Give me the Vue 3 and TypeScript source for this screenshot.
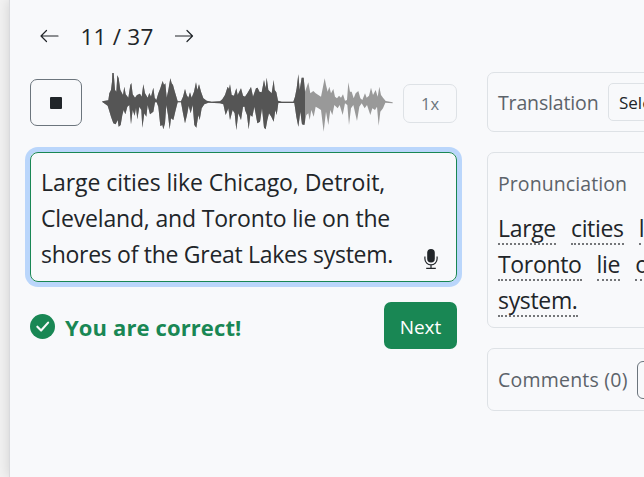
<script setup lang="ts">
import { ref } from 'vue'

type Point = [number, number]

const current = ref(11)
const total = 37
const answerLines = [
  { text: 'Large cities like Chicago, Detroit,', fit: 'fit-a' },
  { text: 'Cleveland, and Toronto lie on the', fit: 'fit-b' },
  { text: 'shores of the Great Lakes system.', fit: 'fit-c' },
]
const wordRows: string[][] = [
  ['Large', 'cities', 'like'],
  ['Toronto', 'lie', 'on'],
  ['system.'],
]

// Waveform envelopes: upper and lower edge of the clip
const upper: Point[] = [
  [22,109],[40,106],[43,85],[48,75],[51,50],[52,24],[56,24],[60,75],[64,80],[67,31],[71,40],[76,75],[84,90],[88,65],[92,88],[100,98],[106,60],[109,54],[113,88],[120,98],[126,90],[135,86],[140,95],[145,58],[150,85],[158,98],[163,84],[168,95],[175,68],[179,98],[184,105],[190,85],[196,70],[203,48],[207,60],[211,55],[215,98],[220,75],[226,40],[230,55],[234,60],[238,75],[244,95],[248,109],[258,109],[264,95],[270,72],[275,90],[280,98],[285,82],[290,98],[297,80],[303,52],[307,75],[312,58],[318,80],[325,100],[335,107],[350,110],[375,109],[382,103],[390,90],[398,65],[402,72],[405,58],[410,90],[417,92],[424,70],[428,90],[438,70],[444,92],
]
const upperTail: Point[] = [
  [0,95],[8,83],[18,66],[24,95],[33,70],[38,68],[43,80],[50,82],[57,45],[62,70],[65,38],[70,75],[80,85],[86,45],[89,75],[94,82],[99,107],[110,110],[145,110],[150,95],[155,70],[160,28],[164,75],[170,38],[176,38],[180,80],[190,52],[196,85],[205,78],[212,85],[220,90],[228,95],[234,65],[239,40],[243,60],[248,80],[253,65],[258,85],[265,72],[270,95],[276,100],[282,92],[288,98],[294,88],[300,107],[306,105],[310,52],[315,80],[320,80],[326,100],[332,85],[340,78],[346,100],[352,105],[360,85],[365,98],[372,92],[378,68],[384,90],[392,75],[398,95],[403,65],[408,90],[414,98],[422,108],[443,112],
]
const lower: Point[] = [
  [22,111],[38,122],[42,135],[48,155],[55,175],[62,178],[68,165],[71,185],[77,180],[82,150],[86,135],[91,148],[97,125],[103,120],[108,178],[113,135],[119,152],[123,128],[127,163],[133,125],[139,135],[142,188],[148,145],[154,155],[158,120],[165,148],[175,140],[180,112],[185,112],[190,125],[196,183],[202,180],[205,193],[210,175],[214,120],[219,150],[224,193],[228,160],[235,165],[242,135],[248,112],[258,112],[264,145],[270,175],[276,150],[281,122],[287,145],[293,120],[298,180],[304,188],[310,150],[314,165],[320,130],[328,118],[340,113],[375,115],[385,118],[392,150],[400,130],[405,165],[413,135],[419,145],[424,195],[430,145],[438,165],[444,125],[449,125],
]
const lowerTail: Point[] = [
  [0,135],[6,150],[11,193],[16,150],[22,155],[28,125],[37,175],[45,170],[51,130],[57,188],[62,193],[67,165],[72,145],[79,155],[86,170],[91,135],[95,150],[100,114],[148,114],[154,155],[160,185],[166,140],[171,178],[178,180],[184,150],[190,145],[194,165],[199,135],[206,155],[212,125],[220,130],[228,135],[236,200],[243,140],[250,180],[256,135],[262,150],[268,120],[278,130],[284,120],[293,150],[300,115],[307,120],[312,180],[318,130],[325,120],[336,168],[343,125],[350,115],[359,130],[366,120],[376,150],[382,130],[390,135],[396,125],[401,182],[406,140],[414,130],[421,113],[443,115],
]
const shift = (points: Point[]): Point[] => points.map(([x, y]): Point => [x + 450, y])
const outline = [
  ...upper,
  ...shift(upperTail),
  ...[...lower, ...shift(lowerTail)].reverse(),
].map((p) => p.join(',')).join(' ')
</script>

<template>
  <main class="page">
    <section class="panel">
      <nav class="pager">
        <svg class="arrow" viewBox="0 0 20 16"><path d="M18 8H1M6.5 2.5 1 8l5.5 5.5" /></svg>
        <span class="count">{{ current }} / {{ total }}</span>
        <svg class="arrow" viewBox="0 0 20 16"><path d="M.5 8h17M12 2.5 17.5 8 12 13.5" /></svg>
      </nav>

      <div class="columns">
        <div class="exercise">
          <div class="player">
            <button class="stop" aria-label="Stop"><span class="square"></span></button>
            <svg class="wave" viewBox="21 15 876 195" preserveAspectRatio="none">
              <defs>
                <clipPath id="played"><rect x="0" y="0" width="630" height="225" /></clipPath>
              </defs>
              <polygon :points="outline" fill="#999" />
              <polygon :points="outline" fill="#555" clip-path="url(#played)" />
            </svg>
            <button class="speed">1x</button>
          </div>

          <div class="answer">
            <div class="answer-text">
              <div v-for="line in answerLines" :key="line.fit" :class="line.fit">{{ line.text }}</div>
            </div>
            <svg class="mic" viewBox="0 0 16 22">
              <rect x="4.2" y="1" width="7.6" height="13.6" rx="3.8" fill="#212529" />
              <path d="M1.9 8.5v2.3a6.1 6.1 0 0 0 12.2 0V8.5M8 17v3.4M3.2 20.4h9.6" fill="none" stroke="#212529" stroke-width="1.2" />
            </svg>
          </div>

          <div class="result">
            <svg class="check" viewBox="0 0 16 16">
              <circle cx="8" cy="8" r="8" fill="#198754" />
              <path d="M4.7 8.1l2.4 2.5 4.5-5.1" fill="none" stroke="#f8f9fa" stroke-width="1.35" stroke-linecap="round" stroke-linejoin="round" />
            </svg>
            <strong class="verdict">You are correct!</strong>
            <button class="next">Next</button>
          </div>
        </div>

        <aside class="side">
          <div class="card translation">
            <span class="label translation-label">Translation</span>
            <div class="select">Select</div>
          </div>
          <div class="card pronunciation">
            <div class="label pron-label">Pronunciation</div>
            <div v-for="(row, i) in wordRows" :key="i" class="words">
              <span v-for="word in row" :key="word" class="word">{{ word }}</span>
            </div>
          </div>
          <div class="card comments">
            <span class="label comments-label">Comments (0)</span>
            <button class="add"></button>
          </div>
        </aside>
      </div>
    </section>
  </main>
</template>

<style>
body {
  margin: 0;
  overflow: hidden;
}
</style>

<style scoped>
* {
  box-sizing: border-box;
}
.page {
  display: flex;
  width: 644px;
  height: 477px;
  padding-left: 9px;
  overflow: hidden;
  background: #f2f2f2;
  color: #212529;
  font-family: "Open Sans", "Noto Sans", sans-serif;
}
button {
  font-family: inherit;
  padding: 0;
  background: transparent;
}
.panel {
  flex: 0 0 auto;
  width: 900px;
  height: 477px;
  padding: 20px 20px 0;
  border-left: 1px solid #d9dadd;
  background: #f8f9fb;
  box-shadow: 0 0 12px rgba(0, 0, 0, 0.14);
}
.pager {
  display: flex;
  align-items: center;
  height: 32px;
  padding-left: 10px;
}
.arrow {
  width: 20px;
  height: 16px;
  fill: none;
  stroke: #212529;
  stroke-width: 1.2;
  stroke-linecap: round;
  stroke-linejoin: round;
}
.count {
  width: 115px;
  padding: 2px 1px 0 0;
  text-align: center;
  font-size: 22.5px;
  letter-spacing: 0.25px;
  line-height: 32px;
}
.columns {
  display: grid;
  grid-template-columns: 427px 360px;
  column-gap: 30px;
  padding-top: 20px;
}
.player {
  display: flex;
  align-items: center;
  height: 60px;
}
.stop {
  display: grid;
  place-items: center;
  width: 52px;
  height: 47px;
  border: 1px solid #6c757d;
  border-radius: 7px;
}
.square {
  width: 12px;
  height: 12px;
  margin: 1px 1px 0 0;
  border-radius: 1px;
  background: #212529;
}
.wave {
  width: 292px;
  height: 65px;
  margin-left: 20px;
}
.speed {
  width: 54px;
  height: 39px;
  margin: 3px 0 0 auto;
  border: 1px solid #dee2e6;
  border-radius: 7px;
  color: #6c757d;
  font-size: 16.5px;
}
.answer {
  display: flex;
  height: 130px;
  margin-top: 20px;
  padding: 11px 17px 11px 10px;
  border: 1px solid #198754;
  border-radius: 8px;
  box-shadow: 0 0 0 5px #bad6fb;
}
.answer-text {
  flex: 1;
  font-size: 23px;
  line-height: 36px;
  white-space: pre;
}
.fit-a {
  letter-spacing: -0.06px;
}
.fit-b {
  letter-spacing: -0.17px;
}
.fit-c {
  letter-spacing: -0.29px;
}
.mic {
  align-self: flex-end;
  width: 16px;
  height: 22px;
}
.result {
  display: flex;
  align-items: center;
  height: 47px;
  margin-top: 20px;
}
.check {
  width: 25px;
  height: 25px;
  margin-top: 1px;
}
.verdict {
  margin-left: 10px;
  padding-top: 2px;
  color: #198754;
  font-size: 22px;
  letter-spacing: 0.12px;
  line-height: 32px;
  white-space: nowrap;
}
.next {
  width: 73px;
  height: 47px;
  margin-left: auto;
  padding-top: 2px;
  border: 0;
  border-radius: 7px;
  background: #198754;
  color: #fff;
  font-size: 19px;
}
.side {
  display: flex;
  flex-direction: column;
  gap: 20px;
}
.card {
  padding-left: 10px;
  border: 1px solid #dee2e6;
  border-radius: 7px;
}
.label {
  color: #5c636a;
  font-size: 19.5px;
  white-space: nowrap;
}
.translation {
  display: flex;
  align-items: center;
  height: 60px;
}
.select {
  width: 180px;
  height: 38px;
  margin-left: 10px;
  padding-left: 10px;
  border: 1px solid #dee2e6;
  border-radius: 5px;
  font-size: 17px;
  line-height: 37px;
}
.translation-label {
  width: 100px;
  letter-spacing: -0.15px;
}
.pronunciation {
  height: 176px;
  padding-top: 16px;
}
.pron-label {
  height: 42px;
  line-height: 30px;
  letter-spacing: 0.08px;
}
.words {
  display: flex;
  gap: 15px;
  height: 36px;
  font-size: 23px;
  letter-spacing: -0.33px;
}
.word {
  height: 34px;
  line-height: 35px;
  border-bottom: 2px dotted #747679;
}
.comments {
  display: flex;
  align-items: center;
  height: 63px;
}
.comments-label {
  width: 130px;
  letter-spacing: 0.22px;
}
.add {
  width: 90px;
  height: 38px;
  margin-left: 9px;
  border: 1px solid #6c757d;
  border-radius: 6px;
}
</style>
